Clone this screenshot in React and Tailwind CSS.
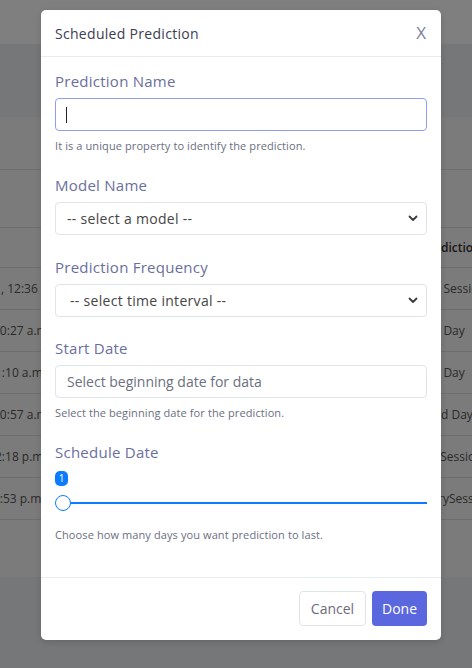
import React from 'react'

const rows = [
  { left: ', 12:36 p.m.', lcls: 'ml-[1px]', right: 't Session', rcls: '-ml-[5px]' },
  { left: '10:27 a.m.', lcls: '-ml-[7px]', right: 't Day', rcls: '-ml-[5px]' },
  { left: '1:10 a.m.', lcls: '-ml-[5px]', right: 't Day', rcls: '-ml-[5px]' },
  { left: '10:57 a.m.', lcls: '-ml-[7px]', right: 'd Day', rcls: 'ml-0' },
  { left: '2:18 p.m.', lcls: '-ml-[5px]', right: 'tSession', rcls: '-ml-[5px]' },
  { left: '12:53 p.m.', lcls: '-ml-[14px]', right: 'rySession', rcls: '-ml-[3px]' },
]

const Chevron = () => (
  <svg width="10" height="7" viewBox="0 0 10 7" fill="none">
    <path d="M1.5 1.5 5 5 8.5 1.5" stroke="#3a3a3a" strokeWidth="1.8" strokeLinecap="round" strokeLinejoin="round" />
  </svg>
)

const Label = ({ children }) => (
  <div className="text-[15px] leading-[22px] tracking-[0.25px] text-[#6a6f9c] mb-[6px]">{children}</div>
)

const Help = ({ children }) => (
  <p className="mt-[7px] text-[11px] leading-[16px] tracking-[0.1px] text-[#6b6e82]">{children}</p>
)

const Select = ({ children, pad = 'pl-[11px]' }) => (
  <div className={`h-[33px] flex items-center justify-between ${pad} pr-[8px] border border-[#e1e3ea] rounded-[4px] bg-white text-[14px] tracking-[0.3px] text-[#454545]`}>
    <span>{children}</span>
    <Chevron />
  </div>
)

const Background = () => (
  <div className="min-h-[668px] bg-[#eceef3] text-[12px] text-[#555]">
    <div className="h-[44px] bg-white" />
    <div className="h-[73px]" />
    <div className="bg-[#f7f7f7] h-[460px]">
      <div className="h-[53px] border-b border-[#dcdcdc]" />
      <div className="h-[58px] border-b border-[#dcdcdc]" />
      <div className="grid grid-cols-[41px_400px_31px] h-[40px] items-center border-b border-[#dcdcdc]">
        <div />
        <div />
        <div className="whitespace-nowrap overflow-hidden font-semibold text-[#333]">diction</div>
      </div>
      {rows.map((r, i) => (
        <div key={i} className="grid grid-cols-[41px_400px_31px] h-[42px] items-center border-b border-[#dcdcdc]">
          <div className="whitespace-nowrap overflow-hidden">
            <span className={`inline-block ${r.lcls}`}>{r.left}</span>
          </div>
          <div />
          <div className="whitespace-nowrap overflow-hidden">
            <span className={`inline-block ${r.rcls}`}>{r.right}</span>
          </div>
        </div>
      ))}
    </div>
  </div>
)

export default function App() {
  return (
    <div className="relative w-[472px] h-[668px] overflow-hidden font-['Open_Sans',sans-serif]">
      <Background />

      {/* Modal backdrop */}
      <div className="absolute inset-0 bg-black/50">
        <div className="ml-[41px] mt-[10px] w-[400px] bg-white rounded-[5px] shadow-[0_2px_6px_rgba(0,0,0,0.15)]">
          <div className="h-[47px] flex items-center justify-between px-[14px] border-b border-[#e9ecef]">
            <h5 className="text-[14px] font-medium tracking-[0.3px] text-[#3b3d52]">Scheduled Prediction</h5>
            <span className="text-[17px] text-[#7d809e] mr-[1px]">X</span>
          </div>

          <div className="px-[14px] pt-[13px] pb-[34px]">
            <Label>Prediction Name</Label>
            <div className="h-[33px] flex items-center border border-[#8e9ef4] rounded-[4px] bg-white">
              <span className="ml-[10px] w-px h-[16px] bg-[#222]" />
            </div>
            <Help>It is a unique property to identify the prediction.</Help>

            <div className="mt-5">
              <Label>Model Name</Label>
              <Select>-- select a model --</Select>
            </div>

            <div className="mt-[21px]">
              <Label>Prediction Frequency</Label>
              <Select pad="pl-[14px]">-- select time interval --</Select>
            </div>

            <div className="mt-5">
              <Label>Start Date</Label>
              <div className="h-[33px] flex items-center px-[11px] border border-[#e1e3ea] rounded-[4px] text-[14px] text-[#6c6f80]">
                Select beginning date for data
              </div>
              <Help>Select the beginning date for the prediction.</Help>
            </div>

            <div className="mt-5">
              <div className="text-[15px] leading-[22px] tracking-[0.25px] text-[#6a6f9c]">Schedule Date</div>
              <div className="mt-2 w-[13px] h-[15px] rounded-[5px] bg-[#0b7cff] text-white text-[10px] leading-[15px] text-center">1</div>
              <div className="relative mt-[9px] h-[16px]">
                <div className="absolute left-[8px] right-0 top-[7px] h-[2px] bg-[#0b7cff]" />
                <div className="absolute left-0 top-0 w-[16px] h-[16px] rounded-full bg-white border-[1.5px] border-[#0b7cff]" />
              </div>
              <p className="mt-4 text-[11px] leading-[16px] tracking-[0.1px] text-[#6b6e82]">Choose how many days you want prediction to last.</p>
            </div>
          </div>

          <div className="flex justify-end gap-[6px] px-[14px] pt-[13px] pb-[14px] border-t border-[#e9ecef]">
            <button className="h-[35px] w-[67px] rounded-[4px] border border-[#e1e3ea] bg-white text-[14px] text-[#6c6c7c]">Cancel</button>
            <button className="h-[35px] w-[55px] rounded-[4px] bg-[#5a67df] text-[14px] font-medium text-white">Done</button>
          </div>
        </div>
      </div>
    </div>
  )
}
